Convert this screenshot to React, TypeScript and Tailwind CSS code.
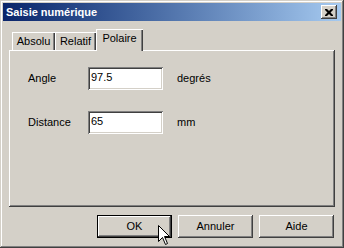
import React from 'react';

const raised =
  'shadow-[inset_-1px_-1px_#404040,inset_1px_1px_#ffffff,inset_-2px_-2px_#808080,inset_2px_2px_#d4d0c8]';
const sunken =
  'shadow-[inset_1px_1px_#808080,inset_-1px_-1px_#ffffff,inset_2px_2px_#404040,inset_-2px_-2px_#d4d0c8]';

const tabs = [
  { label: 'Absolu', w: 'w-[43px]' },
  { label: 'Relatif', w: 'w-[41px]' },
];

const fields = [
  { label: 'Angle', value: '97.5', unit: 'degrés' },
  { label: 'Distance', value: '65', unit: 'mm' },
];

const Cursor = () => (
  <svg width="13" height="20" viewBox="0 0 13 20" className="absolute left-[158px] top-[225px]">
    <path
      d="M0.5 0.5 L0.5 16.5 L4.5 12.5 L7.5 19.5 L9.5 18.5 L6.5 11.5 L11.5 11.5 Z"
      fill="#ffffff"
      stroke="#000000"
      strokeWidth="1"
    />
  </svg>
);

export default function App() {
  return (
    <div
      className={`relative w-[344px] h-[248px] bg-[#d4d0c8] p-[3px] flex flex-col text-[11px] text-black font-['Liberation_Sans',Arial,sans-serif] shadow-[inset_-1px_-1px_#404040,inset_1px_1px_#d4d0c8,inset_-2px_-2px_#808080,inset_2px_2px_#ffffff]`}
    >
      {/* title bar */}
      <div className="h-[18px] flex items-center justify-between pl-[3px] pr-[4px] bg-linear-to-r from-[#0a246a] to-[#a6caf0]">
        <span className="text-white font-bold text-[11px] leading-none">Saisie numérique</span>
        <div className={`w-[16px] h-[14px] bg-[#d4d0c8] flex items-center justify-center ${raised}`}>
          <svg width="8" height="7" viewBox="0 0 8 7">
            <path d="M0 0h2l2 2 2-2h2v1L5.5 3.5 8 6v1H6L4 5 2 7H0V6l2.5-2.5L0 1z" fill="#000" />
          </svg>
        </div>
      </div>

      {/* tabs */}
      <div className="mt-[8px] pl-[9px] flex items-end h-[21px] relative z-10">
        {tabs.map(t => (
          <div
            key={t.label}
            className={`${t.w} h-[18px] flex items-start justify-center pt-[3px] leading-[13px] shadow-[inset_1px_1px_#ffffff,inset_-1px_0_#404040,inset_-2px_0_#808080]`}
          >
            {t.label}
          </div>
        ))}
        <div className="w-[47px] h-[22px] -mb-[1px] bg-[#d4d0c8] flex items-start justify-center pt-[3px] leading-[13px] shadow-[inset_1px_1px_#ffffff,inset_-1px_0_#404040,inset_-2px_0_#808080]">
          Polaire
        </div>
      </div>

      {/* panel */}
      <div className={`mx-[6px] h-[157px] ${raised} pt-[17px] pl-[19px] flex flex-col gap-[21px]`}>
        {fields.map(f => (
          <div key={f.label} className="flex items-center h-[23px]">
            <span className="w-[60px]">{f.label}</span>
            <div className={`w-[75px] h-[23px] bg-white pl-[3px] pt-[4px] leading-[13px] ${sunken}`}>
              {f.value}
            </div>
            <span className="ml-[14px]">{f.unit}</span>
          </div>
        ))}
      </div>

      {/* buttons */}
      <div className="mt-[8px] mr-[7px] flex justify-end gap-[6px]">
        <div className="w-[75px] h-[23px] border border-black">
          <div className={`w-full h-full flex items-center justify-center ${raised}`}>OK</div>
        </div>
        <div className={`w-[75px] h-[23px] flex items-center justify-center ${raised}`}>Annuler</div>
        <div className={`w-[75px] h-[23px] flex items-center justify-center ${raised}`}>Aide</div>
      </div>

      <Cursor />
    </div>
  );
}
